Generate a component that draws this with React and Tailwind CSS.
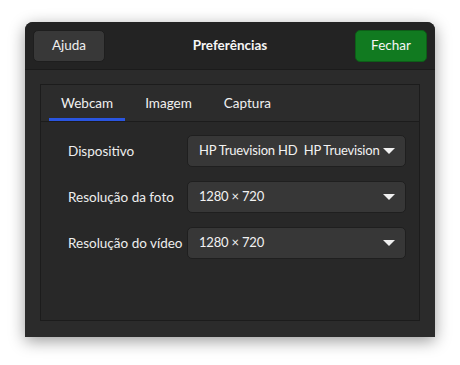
import React from "react";

function Combo({ text }) {
  return (
    <div className="flex h-[32px] w-[219px] items-center rounded-[5px] border border-[#1f1f1f] bg-[#373737] pl-[11px] pr-[10px]">
      <span className="min-w-0 flex-1 overflow-hidden whitespace-pre text-[13px] tracking-[-0.2px] text-[#f2f2f2]">{text}</span>
      <svg width="12" height="6" viewBox="0 0 12 6" className="ml-[2px] shrink-0">
        <path d="M0 0 L12 0 L6 6 Z" fill="#f0f0f0" />
      </svg>
    </div>
  );
}

function Row({ label, value }) {
  return (
    <div className="flex items-center">
      <div className="w-[119px] whitespace-nowrap text-[#eeeeee]">{label}</div>
      <Combo text={value} />
    </div>
  );
}

export default function App() {
  return (
    <div
      className="h-[365px] w-[460px] bg-white pl-[25px] pt-[22px] text-[13.5px]"
      style={{ fontFamily: "Lato, 'Noto Sans', sans-serif" }}
    >
      <div className="flex h-[315px] w-[410px] flex-col overflow-hidden rounded-t-[8px] bg-[#2b2b2b] shadow-[0_4px_16px_rgba(0,0,0,0.4)]">
        <div className="flex h-[48px] items-center justify-between border-b border-[#1b1b1b] bg-[#232323] px-[8px]">
          <button className="flex h-[32px] w-[72px] items-center justify-center rounded-[5px] border border-[#1e1e1e] bg-[#383838] text-[#efefef]">
            Ajuda
          </button>
          <div className="font-bold text-[#f5f5f5]">Preferências</div>
          <button className="flex h-[32px] w-[72px] items-center justify-center rounded-[5px] border border-[#0d5e18] bg-[#117a20] text-[#f5f5f5]">
            Fechar
          </button>
        </div>
        <div className="flex flex-1 flex-col px-[15px] pb-[16px] pt-[14px]">
          <div className="flex flex-1 flex-col border border-[#1c1c1c] bg-[#282828]">
            <div className="flex h-[37px] gap-[8px] border-b border-[#1c1c1c] bg-[#2c2c2c] pl-[8px]">
              <div className="relative flex items-center px-[12px] text-[#f0f0f0]">
                Webcam
                <div className="absolute bottom-0 left-0 right-0 h-[3px] bg-[#2a55e0]" />
              </div>
              <div className="flex items-center px-[12px] text-[#f0f0f0]">Imagem</div>
              <div className="flex items-center px-[12px] text-[#f0f0f0]">Captura</div>
            </div>
            <div className="flex flex-col gap-[14px] pl-[27px] pt-[13px]">
              <Row label="Dispositivo" value="HP Truevision HD  HP Truevision" />
              <Row label="Resolução da foto" value="1280 × 720" />
              <Row label="Resolução do vídeo" value="1280 × 720" />
            </div>
          </div>
        </div>
      </div>
    </div>
  );
}
